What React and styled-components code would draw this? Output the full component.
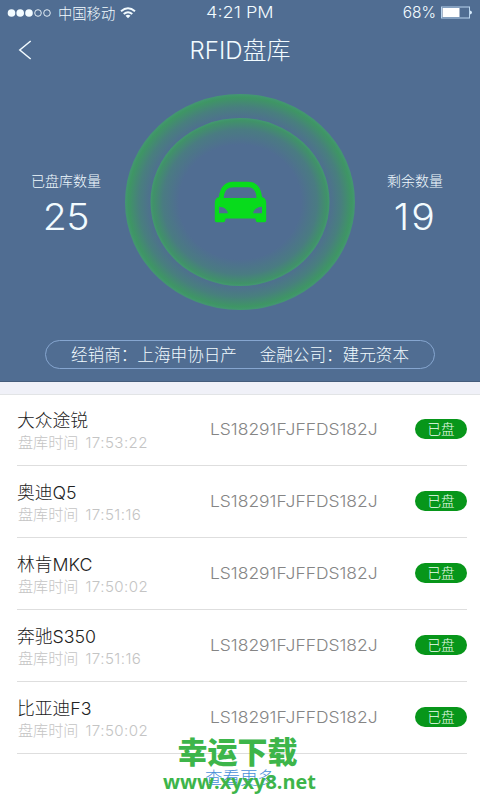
import React from "react";
import styled, { createGlobalStyle } from "styled-components";

const GlobalStyle = createGlobalStyle`
  * { box-sizing: border-box; }
  body { margin: 0; background: #fff; }
`;

const Screen = styled.div`
  position: relative;
  width: 480px;
  height: 800px;
  overflow: hidden;
  background: #fff;
  font-family: Inter, "Noto Sans CJK SC", sans-serif;
  font-weight: 300;
`;

const Header = styled.header`
  height: 382px;
  background: #506d92;
  border-bottom: 1px solid #455c7b;
  color: #f2fbff;
`;

const StatusBar = styled.div`
  display: grid;
  grid-template-columns: 1fr auto 1fr;
  align-items: center;
  height: 25px;
  padding: 0 8px 0 7px;
`;

const StatusGroup = styled.div`
  display: flex;
  align-items: center;
  justify-content: ${(p) => (p.$end ? "flex-end" : "flex-start")};
`;

const Signal = styled.svg`
  display: block;
  width: 45px;
  height: 10px;
`;

const Carrier = styled.span`
  margin: 2px 5px 0 6px;
  font-size: 14.3px;
  line-height: 22px;
`;

const StatusText = styled.span`
  font-size: 15.5px;
  line-height: 24px;
  transform: scaleX(${(p) => p.$stretch || 1});
`;

const Wifi = styled.svg`
  display: block;
  width: 16px;
  height: 12px;
`;

const Battery = styled.svg`
  display: block;
  width: 32px;
  height: 13px;
  margin-left: 4px;
`;

const NavBar = styled.div`
  display: grid;
  grid-template-columns: 60px 1fr 60px;
  align-items: center;
  height: 50px;
`;

const BackIcon = styled.svg`
  display: block;
  width: 14px;
  height: 20px;
  margin-left: 18px;
`;

const Title = styled.h1`
  margin: 0;
  padding-top: 2px;
  text-align: center;
  font-size: 24px;
  font-weight: 300;
  line-height: 36px;
  white-space: nowrap;
`;

const Hero = styled.section`
  display: grid;
  grid-template-columns: 125px 230px 125px;
  height: 216px;
  margin-top: 19px;
`;

const Stat = styled.div`
  display: flex;
  flex-direction: column;
  align-items: center;
  padding-top: 77px;
  padding-left: ${(p) => p.$left || 0}px;
  padding-right: ${(p) => p.$right || 0}px;
`;

const StatLabel = styled.span`
  font-size: 14px;
  line-height: 20px;
  white-space: nowrap;
`;

const StatValue = styled.span`
  margin-top: 5px;
  font-size: 37px;
  line-height: 42px;
  letter-spacing: ${(p) => p.$spacing || 0}px;
  transform: scaleX(1.06);
`;

const Radar = styled.svg`
  display: block;
  width: 230px;
  height: 216px;
`;

const InfoPill = styled.div`
  display: flex;
  align-items: center;
  justify-content: space-between;
  width: 390px;
  height: 29px;
  margin: 30px 0 0 45px;
  padding: 1px 25px 0;
  border: 1px solid #86a6d0;
  border-radius: 15px;
  font-size: 16.6px;
  line-height: 24px;
  white-space: nowrap;
`;

const Divider = styled.div`
  height: 13px;
  background: #f0f1f8;
  border-bottom: 1px solid #e2e4e6;
`;

const List = styled.ul`
  margin: 0;
  padding: 0 13px 0 17px;
  list-style: none;
`;

const Row = styled.li`
  display: grid;
  grid-template-columns: 193px 1fr 52px;
  align-items: center;
  height: 72px;
  padding-bottom: 1px;
  border-bottom: 1px solid #dedede;

  &:first-child {
    height: 71px;
    padding-bottom: 2px;
  }
`;

const Name = styled.div`
  padding-top: 4px;
  font-size: 17.8px;
  line-height: 24px;
  color: #222;
`;

const Time = styled.div`
  display: flex;
  gap: 7px;
  padding-left: 1px;
  font-size: 15.1px;
  line-height: 20px;
  color: #c4c4c4;
`;

const Clock = styled.span`
  letter-spacing: 0.45px;
`;

const Vin = styled.div`
  font-size: 16px;
  line-height: 24px;
  color: #858585;
  transform: scaleX(1.09);
  transform-origin: left center;
`;

const Tag = styled.div`
  height: 20px;
  border-radius: 10px;
  background: #07961a;
  color: #f0fff0;
  font-size: 13.5px;
  line-height: 20px;
  text-align: center;
`;

const More = styled.div`
  padding-top: 12px;
  text-align: center;
  font-size: 17.5px;
  line-height: 24px;
  color: #4a90d9;
`;

const Watermark = styled.div`
  position: absolute;
  left: 160px;
  top: 732px;
  width: 159px;
  color: #3db54a;
  font-weight: 700;
  text-align: center;
  white-space: nowrap;
`;

const WatermarkName = styled.div`
  padding-right: 4px;
  font-family: "Noto Sans CJK SC", sans-serif;
  font-size: 30px;
  font-weight: 900;
  line-height: 37px;
`;

const WatermarkSite = styled.div`
  font-family: "Open Sans", sans-serif;
  font-size: 19.9px;
  line-height: 26px;
`;

const rows = [
  ["大众途锐", "17:53:22"],
  ["奥迪Q5", "17:51:16"],
  ["林肯MKC", "17:50:02"],
  ["奔驰S350", "17:51:16"],
  ["比亚迪F3", "17:50:02"],
];

function SignalDots() {
  return (
    <Signal viewBox="0 0 45 10">
      {[4.5, 13.2, 22].map((x) => <circle key={x} cx={x} cy="5" r="3.8" fill="#f2fbff" />)}
      {[31, 40].map((x) => <circle key={x} cx={x} cy="5" r="3.3" fill="none" stroke="#f2fbff" strokeWidth="0.9" />)}
    </Signal>
  );
}

function CarRadar() {
  return (
    <Radar viewBox="0 0 230 216">
      <defs>
        <radialGradient id="outer">
          <stop offset="0.76" stopColor="#36a94f" stopOpacity="0" />
          <stop offset="0.88" stopColor="#36a94f" stopOpacity="0.3" />
          <stop offset="0.97" stopColor="#36a94f" stopOpacity="0.68" />
          <stop offset="1" stopColor="#3fa866" stopOpacity="0.72" />
        </radialGradient>
        <radialGradient id="inner">
          <stop offset="0.68" stopColor="#36a94f" stopOpacity="0" />
          <stop offset="0.86" stopColor="#36a94f" stopOpacity="0.24" />
          <stop offset="0.97" stopColor="#36a94f" stopOpacity="0.62" />
          <stop offset="1" stopColor="#3fa866" stopOpacity="0.75" />
        </radialGradient>
      </defs>
      <ellipse cx="115" cy="108" rx="115" ry="108" fill="url(#outer)" />
      <ellipse cx="115" cy="108" rx="89.5" ry="84" fill="url(#inner)" />
      <path
        fill="#08db1c"
        fillRule="evenodd"
        d="M94 103C95 93 100 87.700 108 87.700H123C131 87.700 136 93 137 103Q141.200 104 141.200 109V126.500Q141.200 128.300 139.500 128.300H132.500Q130.500 128.300 130.500 124.500H100.500Q100.500 128.300 98.500 128.300H91.500Q89.800 128.300 89.800 126.500V109Q89.800 104 94 103ZM98.700 104H131.500C131 96 128 93.300 122 93.300H109C102.500 93.300 99.500 96 98.700 104ZM94 112.700V119.300H103C102 115 99 113 94 112.700ZM137 112.700C132 113 129 115 128 119.300H137Z"
      />
    </Radar>
  );
}

export default function App() {
  return (
    <>
      <GlobalStyle />
      <Screen>
        <Header>
          <StatusBar>
            <StatusGroup>
              <SignalDots />
              <Carrier>中国移动</Carrier>
              <Wifi viewBox="0 0 16 12">
                <path d="M1 4.300Q8-1.800 15 4.300M3.700 7Q8 3.300 12.300 7" fill="none" stroke="#f2fbff" strokeWidth="1.900" />
                <path d="M5.500 8.700Q8 6.900 10.500 8.700L8 11.300Z" fill="#f2fbff" />
              </Wifi>
            </StatusGroup>
            <StatusText $stretch={1.17}>4:21 PM</StatusText>
            <StatusGroup $end>
              <StatusText>68%</StatusText>
              <Battery viewBox="0 0 32 13">
                <rect x="1.500" y="1" width="28" height="11" fill="none" stroke="#b8d4ed" />
                <rect x="2.500" y="2" width="17" height="9" fill="#fff" />
                <path d="M30 4.500Q32 5 32 6.500T30 8.500Z" fill="#d8ecfc" />
              </Battery>
            </StatusGroup>
          </StatusBar>
          <NavBar>
            <BackIcon viewBox="0 0 14 20">
              <path d="M12.700 1L1.800 10L12.700 19" fill="none" stroke="#f2fbff" strokeWidth="1.500" />
            </BackIcon>
            <Title>RFID盘库</Title>
          </NavBar>
          <Hero>
            <Stat $left={7}>
              <StatLabel>已盘库数量</StatLabel>
              <StatValue $spacing={-0.5}>25</StatValue>
            </Stat>
            <CarRadar />
            <Stat $right={5}>
              <StatLabel>剩余数量</StatLabel>
              <StatValue $spacing={2}>19</StatValue>
            </Stat>
          </Hero>
          <InfoPill>
            <span>经销商：上海申协日产</span>
            <span>金融公司：建元资本</span>
          </InfoPill>
        </Header>
        <Divider />
        <List>
          {rows.map(([name, time]) => (
            <Row key={name}>
              <div>
                <Name>{name}</Name>
                <Time><span>盘库时间</span><Clock>{time}</Clock></Time>
              </div>
              <Vin>LS18291FJFFDS182J</Vin>
              <Tag>已盘</Tag>
            </Row>
          ))}
        </List>
        <More>查看更多</More>
        <Watermark>
          <WatermarkName>幸运下载</WatermarkName>
          <WatermarkSite>www.xyxy8.net</WatermarkSite>
        </Watermark>
      </Screen>
    </>
  );
}
